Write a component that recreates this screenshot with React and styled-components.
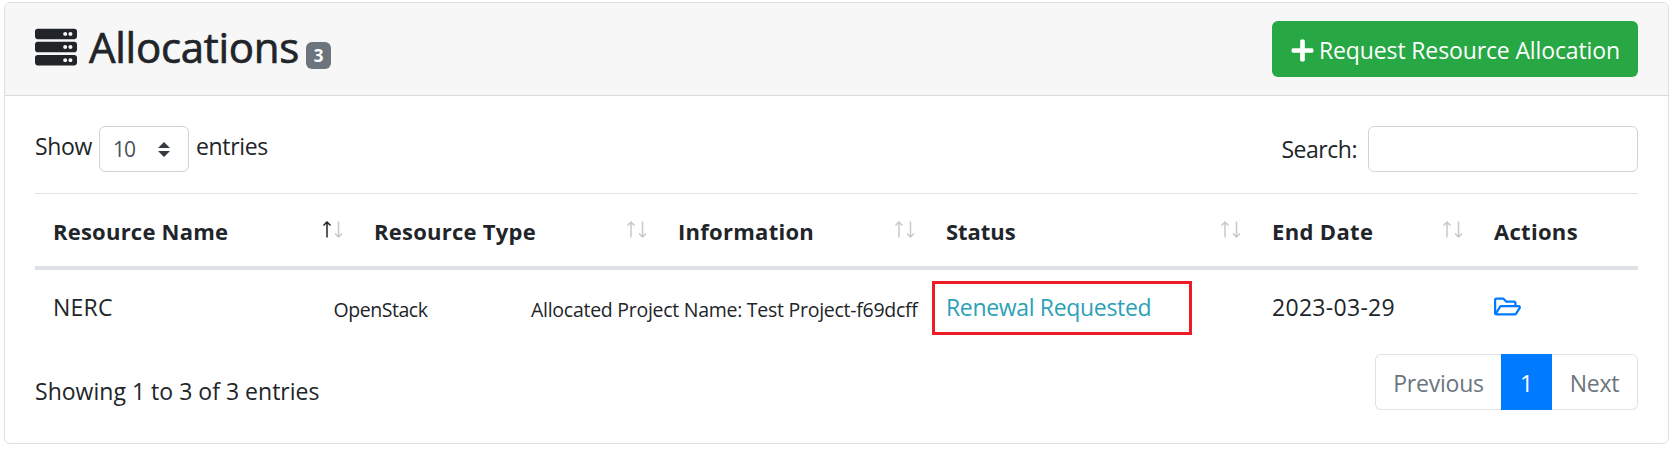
import React from 'react';
import styled, { createGlobalStyle } from 'styled-components';
import { FaServer, FaPlus, FaRegFolderOpen } from 'react-icons/fa';

const GlobalStyle = createGlobalStyle`
  *, *::before, *::after { box-sizing: border-box; }
  body {
    margin: 0;
    background: #fff;
    color: #212529;
    font: 400 23px/36px "Open Sans", "Noto Sans", sans-serif;
  }
  svg { display: block; flex: none; }
`;

const Card = styled.section`
  margin: 2px 0 0 4px;
  width: 1665px;
  height: 442px;
  border: 1px solid #dfdfdf;
  border-radius: 6px;
  overflow: hidden;
  background: #fff;
`;

const CardHeader = styled.header`
  display: flex;
  align-items: flex-start;
  justify-content: space-between;
  height: 93px;
  padding: 18px 30px 0;
  background: #f7f7f7;
  border-bottom: 1px solid #dadada;
`;

const Title = styled.h2`
  display: flex;
  margin: 0;
  padding-top: 5px;
  font-size: 42px;
  font-weight: 500;
  line-height: 42px;
  letter-spacing: -0.28px;
`;

const TitleText = styled.span`
  -webkit-text-stroke: 0.7px currentColor;
  margin: 0 0 0 12px;
`;

const Badge = styled.span`
  width: 25px;
  height: 27px;
  margin: 16px 0 0 7px;
  border-radius: 6px;
  background: #6c757d;
  color: #fff;
  font-size: 17px;
  font-weight: 700;
  line-height: 27px;
  letter-spacing: 0;
  text-align: center;
`;

const RequestButton = styled.button`
  display: flex;
  align-items: center;
  width: 366px;
  height: 56px;
  padding: 2px 0 0 18px;
  gap: 4px;
  border: 0;
  border-radius: 6px;
  background: #28a745;
  color: #fff;
  font: inherit;
  letter-spacing: -0.13px;
  white-space: nowrap;
`;

const CardBody = styled.div`
  padding: 30px 30px 0;
`;

const Controls = styled.div`
  display: flex;
  justify-content: space-between;
  height: 67px;
`;

const LengthControl = styled.label`
  display: flex;
  height: 40px;
  line-height: 41px;
  letter-spacing: -0.35px;
`;

const LengthSelect = styled.span`
  display: flex;
  align-items: center;
  justify-content: space-between;
  width: 90px;
  height: 46px;
  margin: 0 7px;
  padding: 0 18px 0 13px;
  border: 1px solid #ced4da;
  border-radius: 6px;
  background: #fff;
  color: #495057;
  font-size: 21px;
  letter-spacing: -0.9px;
`;

const SearchControl = styled.label`
  display: flex;
  align-items: center;
  height: 46px;
  letter-spacing: -0.47px;
`;

const SearchInput = styled.input`
  width: 270px;
  height: 46px;
  margin-left: 11px;
  border: 1px solid #ced4da;
  border-radius: 6px;
  background: #fff;
  outline: none;
`;

const TableHead = styled.div`
  display: grid;
  grid-template-columns: 321px 304px 268px 326px 222px 162px;
  height: 77px;
  border-top: 1px solid #dee2e6;
  border-bottom: 4px solid #dee2e6;
`;

const HeadCell = styled.div`
  display: flex;
  justify-content: space-between;
  padding: 19px 13px 0 18px;
  font-size: 22px;
  font-weight: 700;
  letter-spacing: ${({ $spacing }) => $spacing}px;
  white-space: nowrap;
`;

const SortMark = styled.svg`
  width: 21px;
  height: 17px;
  margin-top: 8px;
  fill: none;
  stroke-width: 1.5;
`;

const TableRow = styled.div`
  display: grid;
  grid-template-columns: 298px 197px 402px 260px 80px 222px 1fr;
  height: 84px;
  padding-top: 11px;
`;

const Cell = styled.div`
  padding: 8px 0 0 ${({ $indent = 0 }) => $indent}px;
  letter-spacing: ${({ $spacing = 0 }) => $spacing}px;
  white-space: nowrap;
`;

const SmallCell = styled(Cell)`
  padding-top: 11px;
  font-size: 19.5px;
`;

const StatusCell = styled.div`
  height: 54px;
  padding: 5px 0 0 11px;
  border: 3px solid #ed1c24;
  color: #2ba1b8;
  letter-spacing: -0.33px;
  white-space: nowrap;
`;

const FolderLink = styled.a`
  display: block;
  padding-top: 12px;
  color: #007bff;
`;

const TableFooter = styled.footer`
  display: flex;
  justify-content: space-between;
`;

const Summary = styled.div`
  padding-top: 19px;
  letter-spacing: 0.02px;
`;

const Pagination = styled.nav`
  display: flex;
  height: 56px;
`;

const PageItem = styled.span`
  width: ${({ $width }) => $width}px;
  padding-top: ${({ $active }) => ($active ? 11 : 10)}px;
  border: ${({ $active }) => ($active ? '0' : '1px solid #dee2e6')};
  border-left-width: ${({ $last }) => ($last ? 0 : '')};
  border-right-width: ${({ $first }) => ($first ? 0 : '')};
  border-radius: ${({ $first, $last }) => ($first ? '6px 0 0 6px' : $last ? '0 6px 6px 0' : '0')};
  background: ${({ $active }) => ($active ? '#007bff' : '#fff')};
  color: ${({ $active }) => ($active ? '#fff' : '#6c757d')};
  letter-spacing: -0.2px;
  text-align: center;
`;

const columns = [
  { label: 'Resource Name', spacing: 0.22, sort: 'asc' },
  { label: 'Resource Type', spacing: 0.25, sort: 'none' },
  { label: 'Information', spacing: 0.27, sort: 'none' },
  { label: 'Status', spacing: -0.05, sort: 'none' },
  { label: 'End Date', spacing: 0.35, sort: 'none' },
  { label: 'Actions', spacing: 0.3 },
];

function SortArrows({ direction }) {
  return (
    <SortMark viewBox="0 0 21 17">
      <path d="M5 16.5V1.5M1.5 4.5L5 1l3.500 3.500" stroke={direction === 'asc' ? '#212529' : '#c8c9ca'} />
      <path d="M16.500 .5V15.500M13 12.500L16.500 16l3.500-3.500" stroke="#c8c9ca" />
    </SortMark>
  );
}

export default function App() {
  return (
    <>
      <GlobalStyle />
      <Card>
        <CardHeader>
          <Title>
            <FaServer size={42} />
            <TitleText>Allocations</TitleText>
            <Badge>3</Badge>
          </Title>
          <RequestButton>
            <FaPlus size={25} />
            Request Resource Allocation
          </RequestButton>
        </CardHeader>
        <CardBody>
          <Controls>
            <LengthControl>
              Show
              <LengthSelect>
                10
                <svg width="12" height="15" viewBox="0 0 12 15" fill="#343a40">
                  <path d="M6 0l6 6H0zM0 9h12l-6 6z" />
                </svg>
              </LengthSelect>
              entries
            </LengthControl>
            <SearchControl>
              Search:
              <SearchInput type="search" />
            </SearchControl>
          </Controls>
          <TableHead>
            {columns.map(({ label, spacing, sort }) => (
              <HeadCell key={label} $spacing={spacing}>
                {label}
                {sort && <SortArrows direction={sort} />}
              </HeadCell>
            ))}
          </TableHead>
          <TableRow>
            <Cell $indent={18} $spacing={0.2}>NERC</Cell>
            <SmallCell $indent={0.5} $spacing={-0.45}>OpenStack</SmallCell>
            <SmallCell $indent={1} $spacing={-0.27}>Allocated Project Name: Test Project-f69dcff</SmallCell>
            <StatusCell>Renewal Requested</StatusCell>
            <span />
            <Cell $spacing={0.3}>2023-03-29</Cell>
            <FolderLink>
              <FaRegFolderOpen size={27} />
            </FolderLink>
          </TableRow>
          <TableFooter>
            <Summary>Showing 1 to 3 of 3 entries</Summary>
            <Pagination>
              <PageItem $width={126} $first>Previous</PageItem>
              <PageItem $width={51} $active>1</PageItem>
              <PageItem $width={86} $last>Next</PageItem>
            </Pagination>
          </TableFooter>
        </CardBody>
      </Card>
    </>
  );
}
